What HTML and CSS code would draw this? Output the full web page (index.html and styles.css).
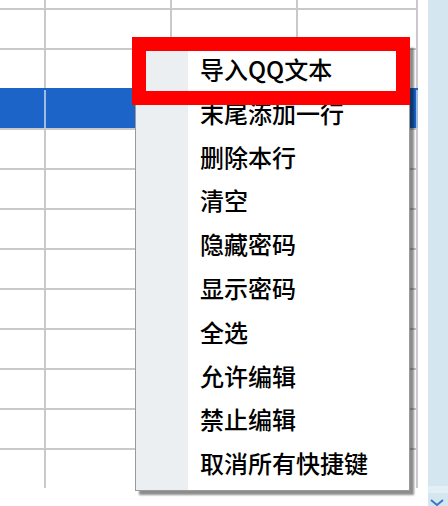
FILE: index.html
```html
<!DOCTYPE html>
<html lang="zh-CN">
<head>
<meta charset="utf-8">
<title>菜单</title>
<link rel="stylesheet" href="styles.css">
</head>
<body>
<div class="screen">
  <div class="sheet-area">
    <div class="sheet">
      <div class="row partial"><div class="cell c1"></div><div class="cell c2"></div><div class="cell c3"></div><div class="cell c4"></div></div>
      <div class="row"><div class="cell c1"></div><div class="cell c2"></div><div class="cell c3"></div><div class="cell c4"></div></div>
      <div class="row"><div class="cell c1"></div><div class="cell c2"></div><div class="cell c3"></div><div class="cell c4"></div></div>
      <div class="row selected"><div class="cell c1"></div><div class="cell c2"></div><div class="cell c3"></div><div class="cell c4"></div></div>
      <div class="row"><div class="cell c1"></div><div class="cell c2"></div><div class="cell c3"></div><div class="cell c4"></div></div>
      <div class="row"><div class="cell c1"></div><div class="cell c2"></div><div class="cell c3"></div><div class="cell c4"></div></div>
      <div class="row"><div class="cell c1"></div><div class="cell c2"></div><div class="cell c3"></div><div class="cell c4"></div></div>
      <div class="row"><div class="cell c1"></div><div class="cell c2"></div><div class="cell c3"></div><div class="cell c4"></div></div>
      <div class="row"><div class="cell c1"></div><div class="cell c2"></div><div class="cell c3"></div><div class="cell c4"></div></div>
      <div class="row"><div class="cell c1"></div><div class="cell c2"></div><div class="cell c3"></div><div class="cell c4"></div></div>
      <div class="row"><div class="cell c1"></div><div class="cell c2"></div><div class="cell c3"></div><div class="cell c4"></div></div>
      <div class="row"><div class="cell c1"></div><div class="cell c2"></div><div class="cell c3"></div><div class="cell c4"></div></div>
      <div class="row"><div class="cell c1"></div><div class="cell c2"></div><div class="cell c3"></div><div class="cell c4"></div></div>
    </div>
  </div>
  <div class="side-panel">
    <div class="panel-band"></div>
    <svg class="panel-arrow" width="14" height="8" viewBox="0 0 14 8"><path d="M1 1 L7 6 L13 1" fill="none" stroke="#3a78c8" stroke-width="2"/></svg>
  </div>

  <div class="menu">
    <div class="gutter"></div>
    <ul class="items">
      <li>导入QQ文本</li>
      <li>末尾添加一行</li>
      <li>删除本行</li>
      <li>清空</li>
      <li>隐藏密码</li>
      <li>显示密码</li>
      <li>全选</li>
      <li>允许编辑</li>
      <li>禁止编辑</li>
      <li>取消所有快捷键</li>
    </ul>
  </div>

  <div class="highlight"></div>
</div>
</body>
</html>
```

FILE: styles.css
```css
html, body {
  margin: 0;
  padding: 0;
  background: #ffffff;
}

.screen {
  position: relative;
  width: 448px;
  height: 506px;
  overflow: hidden;
  display: flex;
  font-family: "Noto Sans CJK SC", "Noto Sans", sans-serif;
}

.sheet-area {
  width: 428px;
  height: 506px;
  background: #ffffff;
  overflow: hidden;
}

.sheet {
  width: 418px;
}

.row {
  display: flex;
  height: 40px;
  box-sizing: border-box;
  border-top: 2px solid #c9c9c9;
}

.row.partial {
  height: 8px;
  border-top: none;
}

.cell {
  box-sizing: border-box;
  height: 100%;
  border-right: 2px solid #c9c9c9;
}

.c1 { width: 46px; }
.c2 { width: 126px; }
.c3 { width: 126px; }
.c4 { width: 120px; }

.row.selected {
  background: #1c64c8;
  border-top-color: #1c64c8;
}

.row.selected .cell {
  border-right-color: #9dbbe3;
}

.side-panel {
  position: relative;
  width: 20px;
  height: 506px;
  background: #d4e6ef;
}

.panel-band {
  position: absolute;
  left: 0;
  right: 0;
  top: 486px;
  height: 7px;
  background: #e4eff5;
}

.panel-arrow {
  position: absolute;
  left: 2px;
  top: 499px;
}

.menu {
  position: absolute;
  left: 135px;
  top: 44px;
  width: 275px;
  box-sizing: border-box;
  border: 1px solid #9a9a9a;
  background: #ffffff;
  display: flex;
  box-shadow: 4px 4px 2px rgba(0, 0, 0, 0.45);
}

.gutter {
  width: 52px;
  background: #eceff1;
}

.items {
  list-style: none;
  margin: 0;
  padding: 3px 0 4px 0;
  flex: 1;
}

.items li {
  height: 43.8px;
  padding-left: 12px;
  padding-bottom: 2px;
  box-sizing: border-box;
  line-height: 41.8px;
  font-size: 24px;
  font-weight: 500;
  color: #000000;
  white-space: nowrap;
}

.highlight {
  position: absolute;
  left: 132px;
  top: 37px;
  width: 278px;
  height: 68px;
  box-sizing: border-box;
  border: 14px solid #ff0000;
}
```
